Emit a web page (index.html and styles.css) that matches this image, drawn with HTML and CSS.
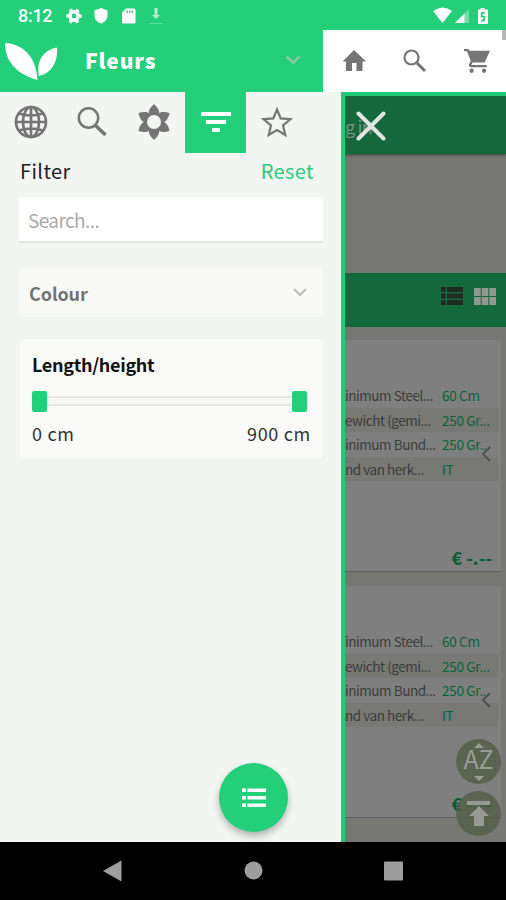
FILE: index.html
```html
<!DOCTYPE html>
<html lang="en">
<head>
<meta charset="utf-8">
<title>Fleurs</title>
<link rel="stylesheet" href="styles.css">
</head>
<body>
<div class="status">
  <span class="clock">8:12</span>
  <svg class="status-left" width="100" height="20" viewBox="0 0 100 20" fill="#fff">
    <g fill="none" stroke="#fff"><circle cx="8" cy="10" r="4.2" stroke-width="3.6"/><circle cx="8" cy="10" r="6.6" stroke-width="2.2" stroke-dasharray="3.4 3.51" stroke-dashoffset="1.7"/></g>
    <path d="M35 2l6.5 2.5v5c0 4-2.8 6.7-6.5 8-3.700-1.300-6.500-4-6.500-8v-5z"/>
    <path fill-rule="evenodd" d="M60 2.500h8q1.500 0 1.500 1.500v12q0 1.500-1.500 1.500H57.500q-1.500 0-1.500-1.500V6.500zM60.500 4.500v2.500h1.300V4.500zM63 4.500v2.500h1.300V4.500zM65.500 4.500v2.500h1.300V4.500z"/>
    <path d="M88.500 2h3v7h2.500l-4 4-4-4h2.500z" opacity=".65"/><path d="M84 17h12v1H84z" opacity=".3"/>
  </svg>
  <svg class="status-right" width="58" height="18" viewBox="0 0 58 18" fill="#fff">
    <path d="M0 4q10-7 19 0L9.500 16z"/>
    <path d="M36 2v14H22z" opacity=".35"/><path d="M31.500 6.500V16H22z"/>
    <path fill-rule="evenodd" d="M47.500 1h4v1.500H54q1 0 1 1V16q0 1-1 1h-8q-1 0-1-1V3.500q0-1 1-1h1.500zM52 5h-4l-.5 5.300h3L50 13h-2v1.500h3.500l1-5.500h-3l.3-2.500H52z"/>
  </svg>
</div>
<header class="header">
  <div class="brand">
    <svg width="53" height="38" viewBox="0 0 53 38" fill="#fff"><path d="M0 0C17 1 31 12 32.500 37 15 32 0 21 0 0zM34 33C31 17 39 7 52 4.500 53 19 47 30 34 33z"/></svg>
    <span class="title">Fleurs</span>
    <svg class="caret" width="16" height="10" viewBox="0 0 16 10" fill="none" stroke="#84c9a0" stroke-width="3"><path d="M1.500 1.500L8 7.500l6.500-6"/></svg>
  </div>
  <div class="tools">
    <svg width="24" height="24" viewBox="0 0 24 24" fill="#757575"><path d="M10 22v-8h4.500v8h6V12.500H24L12 1 .500 12.500H4V22z"/></svg>
    <svg width="24" height="24" viewBox="0 0 24 24" fill="none" stroke="#757575"><circle cx="8.500" cy="8.500" r="7" stroke-width="2.200"/><path d="M14 14l8 8" stroke-width="3"/></svg>
    <svg width="26" height="26" viewBox="0 0 24 24" fill="#757575"><path d="M0 1h4l1 1.500h19l-5 10.800H8l-1.300 2.500H21v2H6.500c-2 0-2.500-2-1.700-3.200l1.500-2.700L2.700 3H0z"/><circle cx="7" cy="21" r="2"/><circle cx="18.500" cy="21" r="2"/></svg>
  </div>
  <i class="scroll-thumb"></i>
</header>
<main class="main">
  <aside class="drawer">
    <nav class="tabs">
      <div class="tab"><svg width="34" height="34" viewBox="0 0 34 34" fill="none" stroke="#757575" stroke-width="2.700"><circle cx="17" cy="17" r="15"/><ellipse cx="17" cy="17" rx="8" ry="15"/><path d="M17 2v30M2 17h30M5 8.500q12 4 24 0M5 25.500q12-4 24 0"/></svg></div>
      <div class="tab"><svg width="32" height="32" viewBox="0 0 32 32" fill="none" stroke="#757575"><circle cx="12.500" cy="12" r="9.700" stroke-width="2.500"/><path d="M19.500 19.500l10 9.500" stroke-width="3.500"/></svg></div>
      <div class="tab"><svg width="36" height="38" viewBox="-18 -19 36 38" fill="#757575"><path id="petal" d="M-5-7C-6-12-3-15 0-18 3-15 6-12 5-7z"/><use href="#petal" transform="rotate(60)"/><use href="#petal" transform="rotate(120)"/><use href="#petal" transform="rotate(180)"/><use href="#petal" transform="rotate(240)"/><use href="#petal" transform="rotate(300)"/><circle r="10"/><circle r="7" fill="#f3f5f3"/></svg></div>
      <div class="tab active"><svg width="30" height="22" viewBox="0 0 30 22" fill="#fff"><path d="M0 1h30v4H0zM5 9h20v4H5zM11 17h8v4h-8z"/></svg></div>
      <div class="tab"><svg width="32" height="31" viewBox="0 0 32 31" fill="none" stroke="#757575" stroke-width="2.200"><path d="M16 2.500l3.700 8.900 9.800.8-7.500 6.200 2.300 9.600-8.300-5-8.300 5L10 18.400l-7.500-6.200 9.800-.8z"/></svg></div>
    </nav>
    <div class="filter-head"><span>Filter</span><span class="reset">Reset</span></div>
    <div class="search">Search...</div>
    <div class="colour"><b>Colour</b><svg width="16" height="10" viewBox="0 0 16 10" fill="none" stroke="#bbb" stroke-width="2"><path d="M2 1l6 6 6-6"/></svg></div>
    <section class="range">
      <b class="range-title">Length/height</b>
      <div class="slider"><i class="handle"></i><i class="track"></i><i class="handle"></i></div>
      <div class="limits"><span>0 cm</span><span>900 cm</span></div>
    </section>
    <div class="fab"><svg width="24" height="20" viewBox="0 0 24 20" fill="#fff"><path d="M0 .5h4v3.500H0zM5.500 .5H24v3.500H5.500zM0 8h4v3.500H0zM5.500 8H24v3.500H5.500zM0 15.500h4V19H0zM5.500 15.500H24V19H5.500z"/></svg></div>
  </aside>
  <div class="page">
    <div class="page-bar"><span class="page-text">g in</span>
      <svg class="close" width="30" height="30" viewBox="0 0 30 30" fill="none" stroke="#e1e4e1" stroke-width="4" stroke-linecap="round"><path d="M2.500 2.500l25 25M27.500 2.500l-25 25"/></svg>
    </div>
    <div class="view-bar">
      <svg width="22" height="18" viewBox="0 0 22 18" fill="#1d2b23"><path d="M0 0h4.500v5H0zM6 0h16v5H6zM0 6.500h4.500v5H0zM6 6.500h16v5H6zM0 13h4.500v5H0zM6 13h16v5H6z"/></svg>
      <svg width="22" height="17" viewBox="0 0 22 17" fill="#92978f"><path d="M0 0h6.700v8H0zM7.700 0h6.600v8H7.700zM15.300 0H22v8h-6.700zM0 9h6.700v8H0zM7.700 9h6.600v8H7.700zM15.300 9H22v8h-6.700z"/></svg>
    </div>
    <article class="card">
      <div class="row"><span class="label">inimum Steel...</span><span class="value">60 Cm</span></div>
      <div class="row shade"><span class="label">ewicht (gemi...</span><span class="value">250 Gr...</span></div>
      <div class="row"><span class="label">inimum Bund...</span><span class="value">250 Gr...</span></div>
      <div class="row shade"><span class="label">nd van herk...</span><span class="value">IT</span></div>
      <svg class="prev" width="10" height="16" viewBox="0 0 10 16" fill="none" stroke="#505250" stroke-width="2"><path d="M9 1L2 8l7 7"/></svg>
      <b class="price">€ -.--</b>
    </article>
    <article class="card">
      <div class="row"><span class="label">inimum Steel...</span><span class="value">60 Cm</span></div>
      <div class="row shade"><span class="label">ewicht (gemi...</span><span class="value">250 Gr...</span></div>
      <div class="row"><span class="label">inimum Bund...</span><span class="value">250 Gr...</span></div>
      <div class="row shade"><span class="label">nd van herk...</span><span class="value">IT</span></div>
      <svg class="prev" width="10" height="16" viewBox="0 0 10 16" fill="none" stroke="#505250" stroke-width="2"><path d="M9 1L2 8l7 7"/></svg>
      <b class="price">€ -.--</b>
    </article>
    <div class="round sort"><i class="up"></i><span>AZ</span><i class="down"></i></div>
    <div class="round top"><svg width="24" height="28" viewBox="0 0 24 28" fill="#979a95"><path d="M0 1h23v4H0zM12 6l10 10h-5v10H7V16H2z"/></svg></div>
  </div>
</main>
<footer class="system">
  <svg width="506" height="58" viewBox="0 0 506 58" fill="#9e9e9e"><path d="M103 29l18.500-10.500v21z"/><circle cx="253.500" cy="28.500" r="9"/><rect x="384" y="19.500" width="19" height="19" rx="1"/></svg>
</footer>
</body>
</html>
```
FILE: styles.css
```css
* { box-sizing: border-box; }
body {
  margin: 0;
  width: 506px;
  height: 900px;
  display: flex;
  flex-direction: column;
  overflow: hidden;
  background: #000;
  font-family: "Noto Sans CJK SC", "Open Sans", sans-serif;
}
svg { display: block; flex: none; }

.status {
  height: 30px;
  display: flex;
  align-items: center;
  padding: 2px 15px 0 18px;
  background: #24cf7a;
  color: #fff;
}
.clock { width: 48px; font: 500 18px/20px Roboto, sans-serif; letter-spacing: -.3px; }
.status-right { margin-left: auto; }

.header { height: 62px; display: flex; position: relative; background: #fff; }
.brand { width: 323px; display: flex; align-items: center; padding: 0 22px 0 5px; background: #24cf7a; }
.brand svg:first-child { margin-top: 2px; }
.title { margin: -3px 0 0 27px; color: #fff; font-weight: 800; font-size: 21px; line-height: 30px; letter-spacing: .85px; }
.caret { margin: -2px 0 0 auto; }
.tools { flex: 1; display: flex; align-items: center; justify-content: space-between; padding: 0 16px 0 19px; }
.scroll-thumb { position: absolute; right: 0; top: 0; width: 4px; height: 10px; background: #b5b5b5; }

.main { height: 750px; display: flex; }
.drawer {
  position: relative;
  width: 345px;
  flex: none;
  border-right: 4px solid #1fcb76;
  background: #f3f5f3;
}
.tabs { display: flex; height: 61px; }
.tab { width: 61.600px; display: flex; align-items: center; justify-content: center; }
.tab svg { margin-top: -1px; }
.active { background: #24cf7a; }
.filter-head {
  display: flex;
  justify-content: space-between;
  margin: 4px 27px 0 20px;
  font-size: 20px;
  line-height: 28px;
  letter-spacing: .4px;
  color: #222;
}
.reset { color: #2ccb7c; }
.search {
  height: 46px;
  margin: 12px 18px 0 19px;
  padding: 0 9px;
  background: #fff;
  border-bottom: 2px solid #e2e2df;
  color: #aaa;
  font-size: 19px;
  line-height: 45px;
  letter-spacing: -.6px;
}
.colour {
  height: 49px;
  margin: 25px 18px 0 19px;
  padding: 0 15px 0 10px;
  display: flex;
  align-items: center;
  justify-content: space-between;
  background: #f9faf8;
  color: #737373;
  font-size: 18px;
  letter-spacing: -.1px;
}
.range { height: 119px; margin: 22px 18px 0 20px; padding: 11px 12px 0; background: #fafbf9; }
.range-title { display: block; color: #111; font-size: 18px; line-height: 28px; letter-spacing: -.3px; }
.slider { display: flex; align-items: center; height: 22px; margin: 12px 4px 0 0; }
.handle { width: 15px; height: 21px; border-radius: 2px; background: #24cf7a; }
.track { flex: 1; height: 10px; border: solid #e5e7e4; border-width: 2px 0; background: #f7f8f6; }
.limits { display: flex; justify-content: space-between; margin-top: 8px; font-size: 18px; line-height: 26px; letter-spacing: .7px; color: #333; }
.fab {
  position: absolute;
  left: 219px;
  top: 671px;
  width: 69px;
  height: 69px;
  border-radius: 50%;
  display: flex;
  align-items: center;
  justify-content: center;
  background: #24cf7a;
  box-shadow: 0 4px 7px rgba(0, 0, 0, .28);
}

.page { position: relative; flex: 1; overflow: hidden; background: #777774; border-top: 4px solid #1fc974; }
.page-bar {
  position: relative;
  height: 58px;
  background: #13693d;
  box-shadow: 0 1px 3px rgba(0, 0, 0, .5);
}
.page-text { display: block; color: #73937f; font-size: 18px; line-height: 60px; letter-spacing: -.8px; }
.close { position: absolute; left: 11px; top: 15px; }
.view-bar {
  height: 54px;
  margin-top: 119px;
  padding: 0 10px 8px 0;
  display: flex;
  align-items: center;
  justify-content: flex-end;
  gap: 11px;
  background: #13693d;
}
.card {
  position: relative;
  height: 232px;
  margin: 13px 5px 0 0;
  padding: 43px 3px 0 0;
  background: #7f7f7f;
  border-bottom: 1px solid #60625f;
}
.card + .card { margin-top: 14px; }
.row { height: 24.600px; display: flex; align-items: center; font-size: 13.500px; line-height: 24px; white-space: nowrap; }
.shade { background: #787875; }
.label { width: 97px; letter-spacing: -.45px; color: #3b3d3b; }
.value { color: #0a6335; letter-spacing: -.3px; }
.prev { position: absolute; right: 10px; top: 106px; }
.price { position: absolute; right: 9px; bottom: 0; color: #075e30; font-size: 18px; line-height: 28px; letter-spacing: 0; }
.round {
  position: absolute;
  left: 111px;
  width: 45px;
  height: 45px;
  border-radius: 50%;
  display: flex;
  flex-direction: column;
  align-items: center;
  justify-content: center;
  background: rgba(82, 94, 70, .8);
}
.sort { top: 643px; color: #999c97; font-size: 25px; line-height: 25px; }
.sort span { margin-top: -2px; }
.top { top: 695px; }
.up, .down { border: solid transparent; border-width: 0 5px; }
.up { border-bottom: 5px solid #999c97; }
.down { border-top: 5px solid #999c97; margin-top: 5px; }

.system { height: 58px; background: #000; }
```
